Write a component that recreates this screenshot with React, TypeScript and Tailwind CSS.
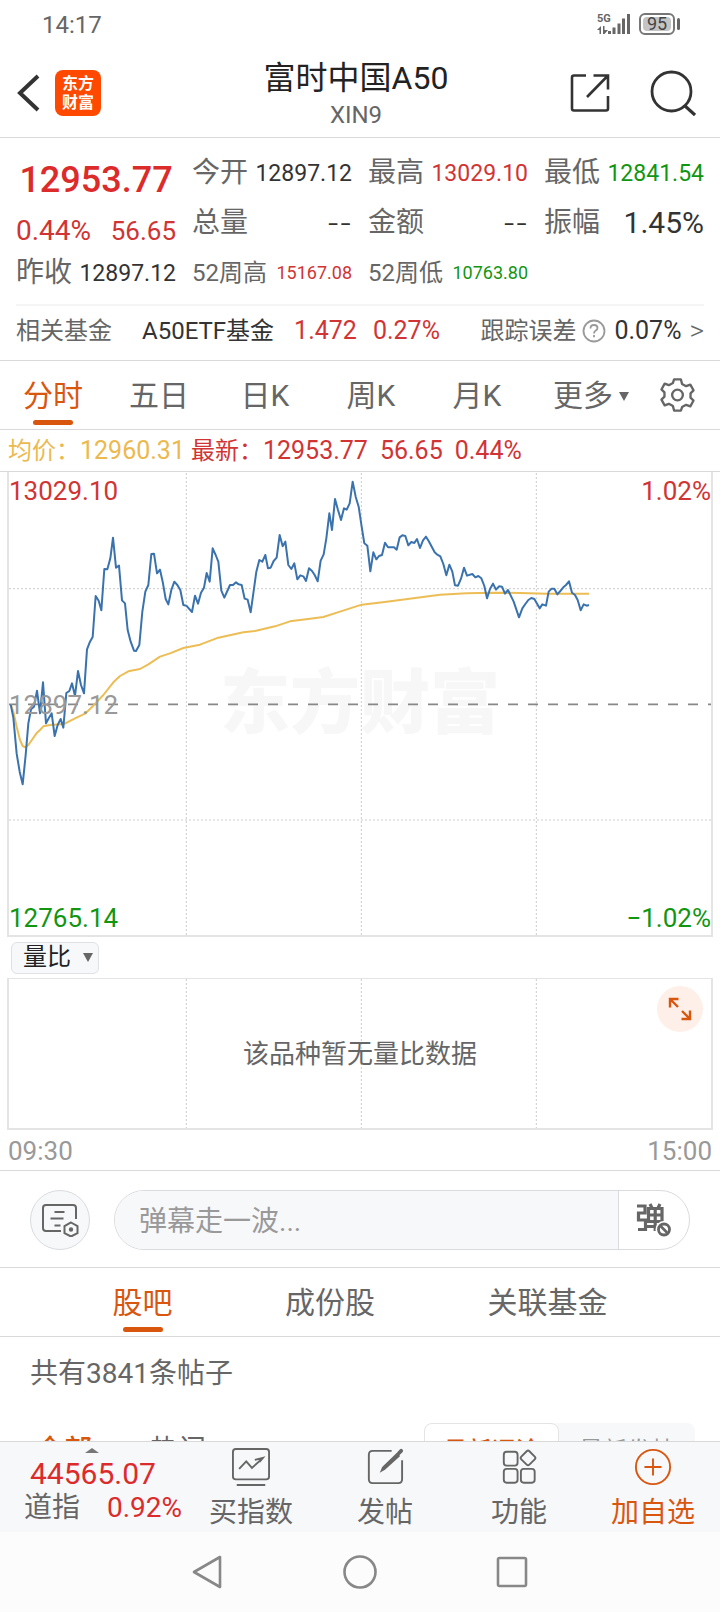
import { useState } from "react";

const PRICE_LINE =
	"32,718 40,758 50,866 59,920 68,958 77,870 85,775 93,733 102,725 111,677 120,745 129,652 138,775 147,758 155,745 164,813 173,780 182,762 190,788 199,684 208,678 216,655 225,693 234,618 243,660 252,685 261,553 270,530 278,516 287,393 296,407 304,436 313,312 322,313 331,280 339,218 348,308 357,302 366,406 375,415 383,495 392,530 402,557 408,558 418,540 427,440 436,380 445,360 454,267 462,266 471,325 480,314 488,350 497,402 505,418 514,375 523,350 532,360 541,375 550,420 559,422 576,441 585,392 594,416 603,383 612,368 620,324 629,350 638,250 647,270 655,290 664,377 673,398 682,378 690,360 699,360 708,352 716,358 725,360 734,401 743,404 752,442 760,385 769,320 778,285 787,290 796,270 804,310 812,308 821,288 830,278 839,210 848,244 856,230 865,300 874,312 883,295 892,343 901,331 910,334 918,348 927,310 936,318 944,330 953,349 962,287 971,268 979,220 988,145 996,195 1005,102 1014,135 1023,165 1032,130 1040,134 1049,115 1058,50 1067,95 1076,125 1085,185 1093,235 1102,242 1111,319 1120,262 1129,283 1137,273 1146,270 1155,233 1164,247 1182,247 1190,254 1199,217 1207,211 1216,213 1225,241 1234,231 1243,234 1251,222 1260,249 1269,226 1278,215 1286,228 1304,262 1312,269 1321,274 1330,297 1339,331 1348,299 1357,320 1365,361 1374,362 1383,341 1392,308 1401,332 1417,327 1426,337 1435,333 1444,340 1453,363 1461,400 1470,372 1479,356 1488,374 1497,364 1506,365 1515,386 1524,375 1541,410 1557,457 1567,430 1576,417 1585,405 1594,399 1603,402 1619,430 1627,418 1638,422 1646,380 1655,371 1663,371 1672,388 1681,378 1690,367 1698,360 1707,349 1716,383 1725,390 1733,405 1742,436 1751,418 1760,422 1767,420";

const AVERAGE_LINE =
	"32,718 40,740 50,785 60,825 68,843 76,847 85,840 111,803 120,795 130,784 155,779 190,778 225,760 255,746 280,722 310,690 340,652 360,633 385,619 420,612 445,598 480,575 510,565 550,549 600,539 655,518 730,502 765,498 825,484 870,469 930,461 970,456 1020,440 1085,419 1160,410 1240,400 1320,389 1400,385 1480,383 1560,384 1640,386 1767,386";

const periods = ["分时", "五日", "日K", "周K", "月K"];
const sections = ["股吧", "成份股", "关联基金"];

function StatusBar() {
	return (
		<div className="flex h-12 shrink-0 items-center justify-between pl-[42px] pr-10 text-[#666]">
			<span className="pt-0.5 text-2xl">14:17</span>
			<div className="flex items-center gap-2">
				<svg width="34" height="22" viewBox="0 0 34 22" fill="currentColor">
					<text x="0" y="9" fontSize="11" fontWeight="700">
						5G
					</text>
					<path d="M0 17l4-4v8H2.500v-4zM6 13h1.500v4H11l-3.500 4H6z" />
					<path d="M11 18h3v3h-3zM15.500 14.500h3V21h-3zM20.500 10.500h3V21h-3zM25 5.500h3V21h-3zM30 1h3v20h-3z" />
				</svg>
				<div className="flex items-center gap-0.5">
					<div className="flex h-[22px] w-9 items-center justify-center rounded-md border-2 border-[#777] p-0.5">
						<span className="w-full rounded-sm bg-[#c4c4c4] text-center text-lg leading-[14px] text-[#444]">
							95
						</span>
					</div>
					<span className="h-3 w-[3px] rounded-sm bg-[#666]" />
				</div>
			</div>
		</div>
	);
}

function Header() {
	return (
		<header className="flex h-[90px] shrink-0 items-center border-b border-[#d9d9d9] px-4 text-[#333]">
			<div className="flex flex-1 items-center gap-3">
				<button aria-label="返回">
					<svg width="27" height="40" viewBox="0 0 27 40" fill="none" stroke="currentColor" strokeWidth="4">
						<path d="M22 3L4 20l18 17" />
					</svg>
				</button>
				<div className="flex h-[46px] w-[46px] flex-col items-center justify-center rounded-lg bg-[#ff4800] text-base font-bold leading-[19px] text-white">
					<span>东方</span>
					<span>财富</span>
				</div>
			</div>
			<div className="pt-1 text-center">
				<h1 className="text-[32px] leading-[40px] text-[#222]">富时中国A50</h1>
				<p className="text-2xl leading-[34px] text-[#666]">XIN9</p>
			</div>
			<div className="flex flex-1 items-center justify-end gap-10 pr-2">
				<button aria-label="分享">
					<svg width="40" height="40" viewBox="0 0 40 40" fill="none" stroke="currentColor" strokeWidth="2.600">
						<path d="M16 2.500H4Q2 2.500 2 4.500V35.500Q2 37.500 4 37.500H36Q38 37.500 38 35.500V23" />
						<path d="M23.500 2.500H38V16.500M38 2.500L17 24" />
					</svg>
				</button>
				<button aria-label="搜索">
					<svg width="46" height="46" viewBox="0 0 46 46" fill="none" stroke="currentColor" strokeWidth="2.800">
						<circle cx="21.500" cy="21.500" r="19.500" />
						<path d="M34.500 35.500L45 45" strokeWidth="3.200" />
					</svg>
				</button>
			</div>
		</header>
	);
}

function Quote() {
	return (
		<section className="shrink-0 border-b border-[#d9d9d9] px-4 pt-2.5 text-[28px] text-[#666]">
			<div className="grid grid-cols-4 grid-rows-[50px_50px_50px] gap-x-4">
				<div className="row-span-2 flex flex-col justify-end gap-2">
					<strong className="text-center text-[36px] font-medium leading-[50px] text-[#dc2b2b]">12953.77</strong>
					<div className="flex h-[35px] items-center justify-between text-[26px] text-[#d13434]">
						<span className="text-[28px]">0.44%</span>
						<span>56.65</span>
					</div>
				</div>
				<div className="flex items-center justify-between">
					今开<span className="text-[23px] text-[#333]">12897.12</span>
				</div>
				<div className="flex items-center justify-between">
					最高<span className="text-[23px] text-[#d13434]">13029.10</span>
				</div>
				<div className="flex items-center justify-between">
					最低<span className="text-[23px] text-[#119611]">12841.54</span>
				</div>
				<div className="flex items-center justify-between">
					总量<span className="font-[Inter] font-light text-[#333]">--</span>
				</div>
				<div className="flex items-center justify-between">
					金额<span className="font-[Inter] font-light text-[#333]">--</span>
				</div>
				<div className="flex items-center justify-between">
					振幅<span className="text-[30px] text-[#333]">1.45%</span>
				</div>
				<div className="flex items-center justify-between">
					昨收<span className="text-[23px] text-[#333]">12897.12</span>
				</div>
				<div className="flex items-center justify-between text-2xl">
					52周高<span className="text-lg text-[#d13434]">15167.08</span>
				</div>
				<div className="flex items-center justify-between text-2xl">
					52周低<span className="text-lg text-[#119611]">10763.80</span>
				</div>
			</div>
			<div className="mt-1.5 flex h-[56px] items-center border-t-2 border-[#f5f5f5] pb-1 text-2xl">
				<span>相关基金</span>
				<span className="ml-[30px] text-[#333]">A50ETF基金</span>
				<span className="ml-5 text-[25px] text-[#d13434]">1.472</span>
				<span className="ml-4 text-[25px] text-[#d13434]">0.27%</span>
				<span className="ml-auto">跟踪误差</span>
				<svg className="ml-1.5 text-[#999]" width="24" height="24" viewBox="0 0 24 24" fill="none" stroke="currentColor" strokeWidth="1.800">
					<circle cx="12" cy="12" r="10.500" />
					<path d="M8.500 9.500q0-3.500 3.500-3.500t3.500 3q0 1.500-2 2.800-1.500 1-1.500 2.700M12 16v2.200" />
				</svg>
				<span className="ml-2 text-[25px] text-[#333]">0.07%</span>
				<span className="ml-2 text-[28px] font-light">&gt;</span>
			</div>
		</section>
	);
}

function PeriodTabs() {
	const [active, setActive] = useState("分时");

	return (
		<nav className="flex h-[69px] shrink-0 border-b border-[#d9d9d9] text-[30px] text-[#666]">
			{periods.map((period) => (
				<button
					key={period}
					onClick={() => setActive(period)}
					className={
						period === active
							? "relative flex-1 pt-0.5 text-[#d9560f]"
							: "relative flex-1 pt-0.5"
					}
				>
					{period}
					{period === active && (
						<span className="absolute bottom-1 left-1/2 h-[5px] w-10 -translate-x-1/2 rounded-full bg-[#d9560f]" />
					)}
				</button>
			))}
			<button aria-haspopup="menu" className="flex w-[122px] items-center justify-center gap-1.5 pt-0.5">
				更多
				<svg width="10" height="9" viewBox="0 0 10 9" fill="currentColor">
					<path d="M0 0h10L5 9z" />
				</svg>
			</button>
			<button aria-label="设置" className="w-[68px] pl-2">
				<svg width="35" height="36" viewBox="0 0 36 36" fill="none" stroke="currentColor" strokeWidth="2.400" strokeLinejoin="round">
					<path d="M14.500 2h7l1.200 4.600 4.200 2.300 4.300-1.600 3.300 6-3.100 3v4.400l3.100 3-3.300 6-4.300-1.600-4.200 2.300L21.500 34h-7l-1.200-4.600-4.200-2.300-4.300 1.600-3.300-6 3.100-3v-4.400l-3.100-3 3.300-6 4.300 1.600 4.200-2.300z" />
					<circle cx="18" cy="18" r="5.500" />
				</svg>
			</button>
		</nav>
	);
}

function GridColumns({ bottom }: { bottom: number }) {
	return (
		<path
			d={`M559 0V${bottom}M1084 0V${bottom}M1609 0V${bottom}`}
			stroke="#ccc"
			strokeDasharray="2 2"
			vectorEffect="non-scaling-stroke"
		/>
	);
}

function PriceChart() {
	return (
		<section className="shrink-0">
			<div className="flex h-[42px] items-center border-b border-[#d9d9d9] px-2 text-2xl text-[#d13434]">
				<span className="text-[#ecb94f]">均价：</span>
				<span className="text-[25px] text-[#ecb94f]">12960.31</span>
				<span className="ml-1.5">最新：</span>
				<span className="text-[25px]">12953.77</span>
				<span className="ml-3 text-[25px]">56.65</span>
				<span className="ml-3 text-[25px]">0.44%</span>
			</div>
			<div className="relative mx-[7px] h-[465px] border-x-2 border-b-2 border-[#e4e4e4] text-[26px] leading-[30px]">
				<div className="absolute inset-0 flex items-center justify-center text-[70px] font-black text-[#f7f7f7]">
					东方财富
				</div>
				<svg
					className="absolute inset-0 h-full w-full"
					viewBox="27 21 2106 1389"
					preserveAspectRatio="none"
					fill="none"
				>
					<GridColumns bottom={1410} />
					<path
						d="M27 371H2133M27 1065H2133"
						stroke="#ccc"
						strokeDasharray="2 2"
						vectorEffect="non-scaling-stroke"
					/>
					<path
						d="M27 718H2133"
						stroke="#888"
						strokeWidth="1.600"
						strokeDasharray="10 10"
						strokeDashoffset="1"
						vectorEffect="non-scaling-stroke"
					/>
					<polyline points={AVERAGE_LINE} stroke="#edbd55" strokeWidth="2" strokeLinejoin="round" vectorEffect="non-scaling-stroke" />
					<polyline points={PRICE_LINE} stroke="#3a72ae" strokeWidth="2" strokeLinejoin="round" vectorEffect="non-scaling-stroke" />
				</svg>
				<div className="absolute inset-0 flex flex-col justify-between pb-0.5 pt-1">
					<div className="flex justify-between text-[#d13434]">
						<span>13029.10</span>
						<span>1.02%</span>
					</div>
					<span className="text-[#999]">12897.12</span>
					<div className="flex justify-between text-[#119611]">
						<span>12765.14</span>
						<span>−1.02%</span>
					</div>
				</div>
			</div>
		</section>
	);
}

function VolumeChart() {
	return (
		<section className="shrink-0 border-b border-[#d9d9d9]">
			<div className="flex h-[41px] items-center px-[11px]">
				<div className="relative flex items-center">
					<select
						aria-label="指标"
						className="h-8 w-[88px] appearance-none rounded-md border border-[#dfe1e5] bg-[#f7f8fa] pb-0.5 pl-[11px] text-2xl leading-[28px] text-[#222]"
					>
						<option>量比</option>
					</select>
					<svg className="pointer-events-none absolute right-1.5" width="10" height="9" viewBox="0 0 10 9" fill="#666">
						<path d="M0 0h10L5 9z" />
					</svg>
				</div>
			</div>
			<div className="relative mx-[7px] flex h-[152px] items-center justify-center border-x-2 border-b-2 border-t border-[#e4e4e4]">
				<svg
					className="absolute inset-0 h-full w-full"
					viewBox="27 0 2106 447"
					preserveAspectRatio="none"
					fill="none"
				>
					<GridColumns bottom={447} />
				</svg>
				<p className="relative text-[26px] text-[#666]">该品种暂无量比数据</p>
				<button
					aria-label="全屏"
					className="absolute right-2 top-[7px] flex h-[46px] w-[46px] items-center justify-center rounded-full bg-[#fef0e8]"
				>
					<svg width="24" height="24" viewBox="0 0 24 24" fill="none" stroke="#d9560f" strokeWidth="2.400">
						<path d="M2 10.500V2h8.500M2 2l8 8M22 13.500V22h-8.500M22 22l-8-8" />
					</svg>
				</button>
			</div>
			<div className="flex h-10 items-center justify-between px-2 pt-0.5 text-[26px] text-[#999]">
				<span>09:30</span>
				<span>15:00</span>
			</div>
		</section>
	);
}

function CommentBar() {
	return (
		<div className="flex h-[97px] shrink-0 items-center gap-6 border-b border-[#d9d9d9] px-[30px] pt-0.5">
			<button
				aria-label="弹幕设置"
				className="flex h-[60px] w-[60px] shrink-0 items-center justify-center rounded-full border border-[#d9dbdf] bg-[#f7f8fa]"
			>
				<svg width="38" height="34" viewBox="0 0 38 34" fill="none" stroke="#666" strokeWidth="2">
					<path d="M20 28H5Q2 28 2 25V5Q2 2 5 2H32Q35 2 35 5V16" />
					<path d="M13.500 9H23.500M9.500 15.500H22.500M13.500 22.500H19.500" />
					<path d="M30 19.500l6.500 3.700v7L30 33.500l-6.500-3.300v-7z" />
					<circle cx="30" cy="26.500" r="1.200" fill="#666" />
				</svg>
			</button>
			<div className="flex h-[60px] min-w-0 flex-1 overflow-hidden rounded-full border border-[#d9dbdf]">
				<input
					type="text"
					aria-label="弹幕"
					placeholder="弹幕走一波..."
					className="min-w-0 flex-1 bg-[#f7f8fa] pl-6 pt-0.5 text-[28px] placeholder:text-[#999]"
				/>
				<button aria-label="关闭弹幕" className="flex w-[71px] items-center justify-center border-l border-[#d9dbdf]">
					<svg width="36" height="34" viewBox="0 0 36 34" fill="none" stroke="#666" strokeWidth="3.200">
						<path d="M1 3H9V10H2.500V17H9.500V26.500H2M14 1l2 4M24 1l-2 4M12.500 5.500H26V18.500H12.500ZM12.500 12H26M19.200 5V28M11 23.500H20" />
						<circle cx="28" cy="26.500" r="8.500" fill="#fff" stroke="none" />
						<circle cx="28" cy="26.500" r="5.500" strokeWidth="2.800" />
						<path d="M24 22.500l8 8" strokeWidth="2.600" />
					</svg>
				</button>
			</div>
		</div>
	);
}

function Community() {
	const [active, setActive] = useState("股吧");

	return (
		<section className="shrink-0 text-[#666]">
			<div className="flex h-[69px] justify-evenly border-b border-[#d9d9d9] text-[30px]">
				{sections.map((section) => (
					<button
						key={section}
						onClick={() => setActive(section)}
						className={section === active ? "relative pt-0.5 text-[#d9560f]" : "relative pt-0.5"}
					>
						{section}
						{section === active && (
							<span className="absolute bottom-1 left-1/2 h-[5px] w-10 -translate-x-1/2 rounded-full bg-[#d9560f]" />
						)}
					</button>
				))}
			</div>
			<p className="flex h-[74px] items-center px-[30px] text-[28px]">共有3841条帖子</p>
			<div className="mt-3 flex items-center pl-9 pr-[25px] text-[28px]">
				<button className="font-medium text-[#d9560f]">全部</button>
				<button className="ml-[58px]">热门</button>
				<div className="ml-auto flex h-14 rounded-lg bg-[#f7f8fa] text-2xl">
					<button className="w-[135px] rounded-lg border border-[#e4e4e4] bg-white font-medium text-[#d9560f]">
						最新评论
					</button>
					<button className="w-[136px] text-[#999]">最新发帖</button>
				</div>
			</div>
		</section>
	);
}

function BottomBar() {
	return (
		<footer className="flex h-[91px] shrink-0 border-t border-[#d9d9d9] bg-[#f7f8fa] text-[28px] text-[#666]">
			<button className="flex w-[184px] flex-col items-start pt-1.5">
				<svg className="ml-[85px]" width="14" height="5" viewBox="0 0 14 5" fill="#777">
					<path d="M7 0l7 5H0z" />
				</svg>
				<span className="ml-[30px] mt-1 text-[30px] leading-[34px] text-[#dc2b2b]">44565.07</span>
				<span className="ml-6 flex w-[158px] justify-between leading-[34px]">
					道指<span className="text-[#dc2b2b]">0.92%</span>
				</span>
			</button>
			<button className="flex flex-1 flex-col items-center pt-1.5">
				<svg width="40" height="40" viewBox="0 0 40 40" fill="none" stroke="currentColor" strokeWidth="2">
					<rect x="1" y="1" width="38" height="32" rx="3" />
					<path d="M5 39H35M7.500 22l7.500-8 6 7 11-10M24 12.500l8.500-2-3.500 4" />
				</svg>
				<span className="mt-2 leading-[38px]">买指数</span>
			</button>
			<button className="flex flex-1 flex-col items-center pt-1.5">
				<svg width="40" height="40" viewBox="0 0 40 40" fill="none" stroke="currentColor" strokeWidth="2">
					<path d="M27 3H7Q3 3 3 7V33Q3 37 7 37H34Q38 37 38 33V13" />
					<path d="M32.500 5l3.500 3.500L20 23l-5.500 3L17 20z" fill="currentColor" stroke="none" />
					<path d="M34.500 5.500L37 3" strokeWidth="4" strokeLinecap="round" />
				</svg>
				<span className="mt-2 leading-[38px]">发帖</span>
			</button>
			<button className="flex flex-1 flex-col items-center pt-1.5">
				<svg width="40" height="40" viewBox="0 0 40 40" fill="none" stroke="currentColor" strokeWidth="2">
					<rect x="4" y="4" width="14.500" height="14.500" rx="3" />
					<rect x="4" y="22" width="14.500" height="14.500" rx="3" />
					<rect x="22" y="22" width="14.500" height="14.500" rx="3" />
					<rect x="23.500" y="4.500" width="12" height="12" rx="2" transform="rotate(45 29.500 10.500)" />
				</svg>
				<span className="mt-2 leading-[38px]">功能</span>
			</button>
			<button className="flex flex-1 flex-col items-center pt-1.5 text-[#d9560f]">
				<svg width="40" height="40" viewBox="0 0 40 40" fill="none" stroke="currentColor" strokeWidth="2">
					<circle cx="20" cy="20" r="18" />
					<path d="M11 20H29M20 11V29" />
				</svg>
				<span className="mt-2 leading-[38px]">加自选</span>
			</button>
		</footer>
	);
}

function SystemNav() {
	return (
		<div className="flex h-20 shrink-0 items-center justify-center gap-[116px] bg-[#fcfcfc]">
			<button aria-label="后退">
				<svg width="36" height="36" viewBox="0 0 36 36" fill="none" stroke="#888" strokeWidth="2.600" strokeLinejoin="round">
					<path d="M30 3V33L4 18z" />
				</svg>
			</button>
			<button aria-label="主屏幕">
				<svg width="36" height="36" viewBox="0 0 36 36" fill="none" stroke="#888" strokeWidth="2.600">
					<circle cx="18" cy="18" r="15.500" />
				</svg>
			</button>
			<button aria-label="最近任务">
				<svg width="36" height="36" viewBox="0 0 36 36" fill="none" stroke="#888" strokeWidth="2.600">
					<rect x="4" y="4" width="28" height="28" rx="1.500" />
				</svg>
			</button>
		</div>
	);
}

export default function App() {
	return (
		<div className="flex h-screen flex-col bg-white font-[Roboto,'Noto_Sans_CJK_SC',sans-serif] leading-none">
			<StatusBar />
			<Header />
			<main className="flex min-h-0 flex-1 flex-col overflow-hidden">
				<Quote />
				<PeriodTabs />
				<PriceChart />
				<VolumeChart />
				<CommentBar />
				<Community />
			</main>
			<BottomBar />
			<SystemNav />
		</div>
	);
}
